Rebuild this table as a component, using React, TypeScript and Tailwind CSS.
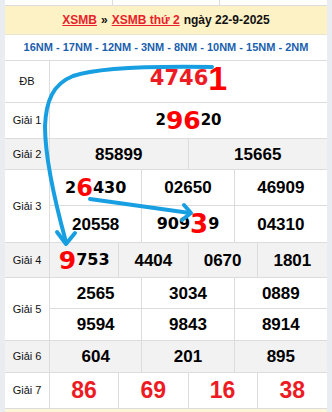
import React from "react";

const dv = "font-['DejaVu_Sans',Verdana,sans-serif] font-bold";

function Row({
  label,
  h,
  gray,
  children,
}: {
  label: string;
  h: string;
  gray?: boolean;
  children: React.ReactNode;
}) {
  return (
    <div className={`flex border-b border-[#dcdcdc] ${h} ${gray ? "bg-[#f2f2f2]" : "bg-white"}`}>
      <div className="w-[45px] shrink-0 border-r border-[#dcdcdc] flex items-center justify-center text-[11px] text-[#111]">
        {label}
      </div>
      <div className="flex-1 min-w-0">{children}</div>
    </div>
  );
}

function Cell({
  children,
  right,
  bottom,
}: {
  children: React.ReactNode;
  right?: boolean;
  bottom?: boolean;
}) {
  return (
    <div
      className={`flex items-center justify-center leading-none ${right ? "border-r border-[#dcdcdc]" : ""} ${bottom ? "border-b border-[#dcdcdc]" : ""}`}
    >
      {children}
    </div>
  );
}

function Num({ v, red }: { v: string; red?: boolean }) {
  return (
    <span className={`text-[17px] font-bold ${red ? "text-[#ed1c24] text-[23px]" : "text-black"}`}>
      {v}
    </span>
  );
}

function Grid3({ rows }: { rows: string[][] }) {
  return (
    <div className={`grid grid-cols-3 h-full ${rows.length > 1 ? "grid-rows-2" : "grid-rows-1"}`}>
      {rows.map((r, i) =>
        r.map((v, j) => (
          <Cell key={`${i}-${j}`} right={j < 2} bottom={i < rows.length - 1}>
            <Num v={v} />
          </Cell>
        ))
      )}
    </div>
  );
}

export default function App() {
  const codes = "16NM - 17NM - 12NM - 3NM - 8NM - 10NM - 15NM - 2NM";

  return (
    <div className="relative w-[332px] h-[412px] overflow-hidden bg-[#e9edf1] px-[5px] font-['Liberation_Sans',Arial,sans-serif]">
      {/* tail of the previous table */}
      <div className="flex h-[6px] bg-white border-b border-[#dcdcdc]">
        <div className="w-[108px] border-r border-[#dcdcdc]" />
        <div className="w-[107px] border-r border-[#dcdcdc]" />
        <div className="flex-1" />
      </div>

      <div className="h-[29px] bg-[#fdf2c6] border-b border-[#e8e4d0] flex items-center justify-center text-[12px] font-bold text-[#111]">
        <span className="text-[#e8222b] underline">XSMB</span>
        <span className="mx-[4px]">»</span>
        <span className="text-[#e8222b] underline">XSMB thứ 2</span>
        <span className="ml-[4px]">ngày 22-9-2025</span>
      </div>

      <div className="h-[26px] bg-white border-b border-[#dcdcdc] flex items-center justify-center text-[11px] font-bold text-[#1b5fae]">
        {codes}
      </div>

      <Row label="ĐB" h="h-[42px]">
        <Cell>
          <span className={`${dv} text-[21px] text-[#ed1c24]`}>4746</span>
          <span className="text-[34px] font-bold text-[#ff0000]">1</span>
        </Cell>
      </Row>

      <Row label="Giải 1" h="h-[36px]">
        <div className="h-full flex items-center justify-center leading-none">
          <span className={`${dv} text-[15px] text-black`}>2</span>
          <span className={`${dv} text-[25px] text-[#ff0000]`}>96</span>
          <span className={`${dv} text-[15px] text-black`}>20</span>
        </div>
      </Row>

      <Row label="Giải 2" h="h-[31px]" gray>
        <div className="grid grid-cols-2 h-full">
          <Cell right>
            <Num v="85899" />
          </Cell>
          <Cell>
            <Num v="15665" />
          </Cell>
        </div>
      </Row>

      <Row label="Giải 3" h="h-[73px]">
        <div className="grid grid-cols-3 grid-rows-2 h-full">
          <Cell right bottom>
            <span className={`${dv} text-[16px] text-black`}>2</span>
            <span className={`${dv} text-[24px] text-[#ff0000]`}>6</span>
            <span className={`${dv} text-[16px] text-black`}>430</span>
          </Cell>
          <Cell right bottom>
            <Num v="02650" />
          </Cell>
          <Cell bottom>
            <Num v="46909" />
          </Cell>
          <Cell right>
            <Num v="20558" />
          </Cell>
          <Cell right>
            <span className={`${dv} text-[16px] text-black`}>909</span>
            <span className={`${dv} text-[26px] text-[#ff0000]`}>3</span>
            <span className={`${dv} text-[16px] text-black`}>9</span>
          </Cell>
          <Cell>
            <Num v="04310" />
          </Cell>
        </div>
      </Row>

      <Row label="Giải 4" h="h-[35px]" gray>
        <div className="grid grid-cols-4 h-full">
          <Cell right>
            <span className={`${dv} text-[25px] text-[#ff0000]`}>9</span>
            <span className={`${dv} text-[16px] text-black`}>753</span>
          </Cell>
          <Cell right>
            <Num v="4404" />
          </Cell>
          <Cell right>
            <Num v="0670" />
          </Cell>
          <Cell>
            <Num v="1801" />
          </Cell>
        </div>
      </Row>

      <Row label="Giải 5" h="h-[63px]">
        <Grid3
          rows={[
            ["2565", "3034", "0889"],
            ["9594", "9843", "8914"],
          ]}
        />
      </Row>

      <Row label="Giải 6" h="h-[32px]" gray>
        <Grid3 rows={[["604", "201", "895"]]} />
      </Row>

      <Row label="Giải 7" h="h-[36px]">
        <div className="grid grid-cols-4 h-full">
          {["86", "69", "16", "38"].map((v, i) => (
            <Cell key={v} right={i < 3}>
              <Num v={v} red />
            </Cell>
          ))}
        </div>
      </Row>

      <div className="h-[10px] bg-[#fdf6d8]" />

      {/* hand-drawn arrows over the table */}
      <svg
        className="absolute top-0 left-0 pointer-events-none"
        width="332"
        height="412"
        viewBox="0 0 332 412"
        fill="none"
        stroke="#189fe2"
        strokeWidth="4"
        strokeLinecap="round"
        strokeLinejoin="round"
      >
        <path d="M212 67 C150 66 96 68 73 76 C53 84 46 101 45 126 C45 160 55 202 66 242" />
        <path d="M57 232 L66 244 L75 233" />
        <path d="M90 199 L190 213" />
        <path d="M184 205 L191 213 L182 220" />
      </svg>
    </div>
  );
}
